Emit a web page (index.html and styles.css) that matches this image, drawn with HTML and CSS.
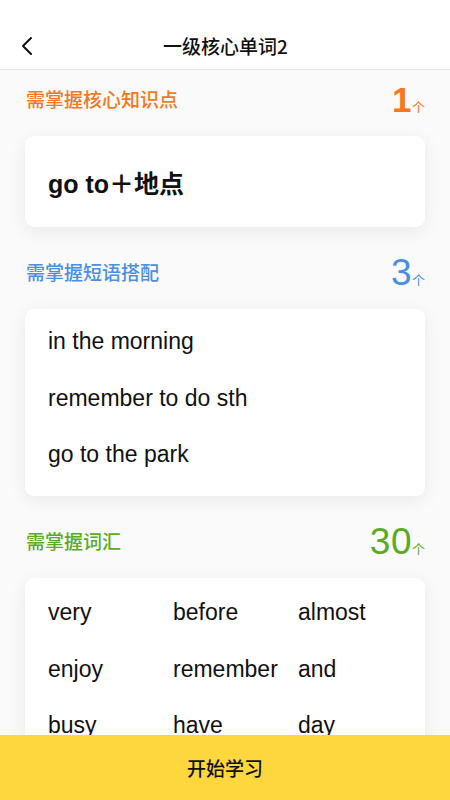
FILE: index.html
```html
<!DOCTYPE html>
<html lang="zh-CN">
<head>
  <meta charset="UTF-8">
  <meta name="viewport" content="width=device-width, initial-scale=1.0">
  <title>一级核心单词2</title>
  <link rel="stylesheet" href="styles.css">
</head>
<body>
  <header class="nav">
    <a class="back" href="#">
      <svg width="14" height="20" viewBox="0 0 14 20">
        <polyline points="11,2 3,10 11,18" fill="none" stroke="#111" stroke-width="2" stroke-linecap="round" stroke-linejoin="round"/>
      </svg>
    </a>
    <h1 class="nav-title">一级核心单词2</h1>
  </header>

  <main class="content">
    <section class="section">
      <div class="section-head orange">
        <h2>需掌握核心知识点</h2>
        <div class="count"><b class="bold">1</b><span>个</span></div>
      </div>
      <div class="card point">
        <p>go to＋地点</p>
      </div>
    </section>

    <section class="section">
      <div class="section-head blue">
        <h2>需掌握短语搭配</h2>
        <div class="count"><b>3</b><span>个</span></div>
      </div>
      <div class="card list">
        <p>in the morning</p>
        <p>remember to do sth</p>
        <p>go to the park</p>
      </div>
    </section>

    <section class="section">
      <div class="section-head green">
        <h2>需掌握词汇</h2>
        <div class="count"><b>30</b><span>个</span></div>
      </div>
      <div class="card words">
        <span>very</span><span>before</span><span>almost</span>
        <span>enjoy</span><span>remember</span><span>and</span>
        <span>busy</span><span>have</span><span>day</span>
      </div>
    </section>
  </main>

  <button class="start">开始学习</button>
</body>
</html>
```

FILE: styles.css
```css
* {
  margin: 0;
  padding: 0;
  box-sizing: border-box;
}
body {
  font-family: "Liberation Sans", "Noto Sans CJK SC", sans-serif;
  background: #fafafa;
  color: #111;
  overflow: hidden;
  height: 800px;
}

/* Nav bar */
.nav {
  height: 70px;
  padding-top: 22px;
  background: #fff;
  border-bottom: 1px solid #e6e6e6;
  display: flex;
  align-items: center;
  justify-content: center;
  position: relative;
}
.nav .back {
  position: absolute;
  left: 20px;
  top: 36px;
  display: flex;
}
.nav-title {
  font-family: "Noto Sans CJK SC", sans-serif;
  font-size: 19px;
  font-weight: 500;
  color: #111;
  margin-left: 1px;
}

/* Sections */
.content {
  padding: 0 25px;
}
.section-head {
  height: 66px;
  padding: 12px 0 18px;
  display: flex;
  align-items: center;
  justify-content: space-between;
}
.section + .section .section-head {
  margin-top: 16px;
}
.section-head h2 {
  font-size: 19px;
  font-weight: 500;
  padding-left: 1px;
  margin-top: -3px;
}
.count {
  line-height: 36px;
  height: 36px;
  display: flex;
  align-items: baseline;
}
.count b {
  font-size: 37px;
  font-weight: 400;
  letter-spacing: 0.5px;
}
.count b.bold {
  font-weight: 700;
  font-size: 35px;
}
.count span {
  font-size: 13px;
}
.orange { color: #f6771c; }
.blue { color: #4a8fe3; }
.green { color: #5aab1f; }

/* Cards */
.card {
  background: #fff;
  border-radius: 9px;
  box-shadow: 0 4px 18px rgba(0, 0, 0, 0.07);
  padding: 0 23px;
}
.point {
  height: 91px;
  display: flex;
  align-items: center;
}
.point p {
  font-size: 25px;
  font-weight: 700;
}
.list {
  padding-top: 18px;
  padding-bottom: 28px;
  display: flex;
  flex-direction: column;
  gap: 28.5px;
}
.list p,
.words span {
  font-size: 23px;
  line-height: 28px;
}
.words {
  padding-top: 20px;
  padding-bottom: 28px;
  display: grid;
  grid-template-columns: repeat(3, 125px);
  row-gap: 28.5px;
}

/* Bottom button */
.start {
  position: fixed;
  left: 0;
  right: 0;
  bottom: 0;
  height: 65px;
  border: none;
  background: #fed73f;
  color: #111;
  font-family: "Noto Sans CJK SC", sans-serif;
  font-size: 19px;
  font-weight: 500;
}
```
